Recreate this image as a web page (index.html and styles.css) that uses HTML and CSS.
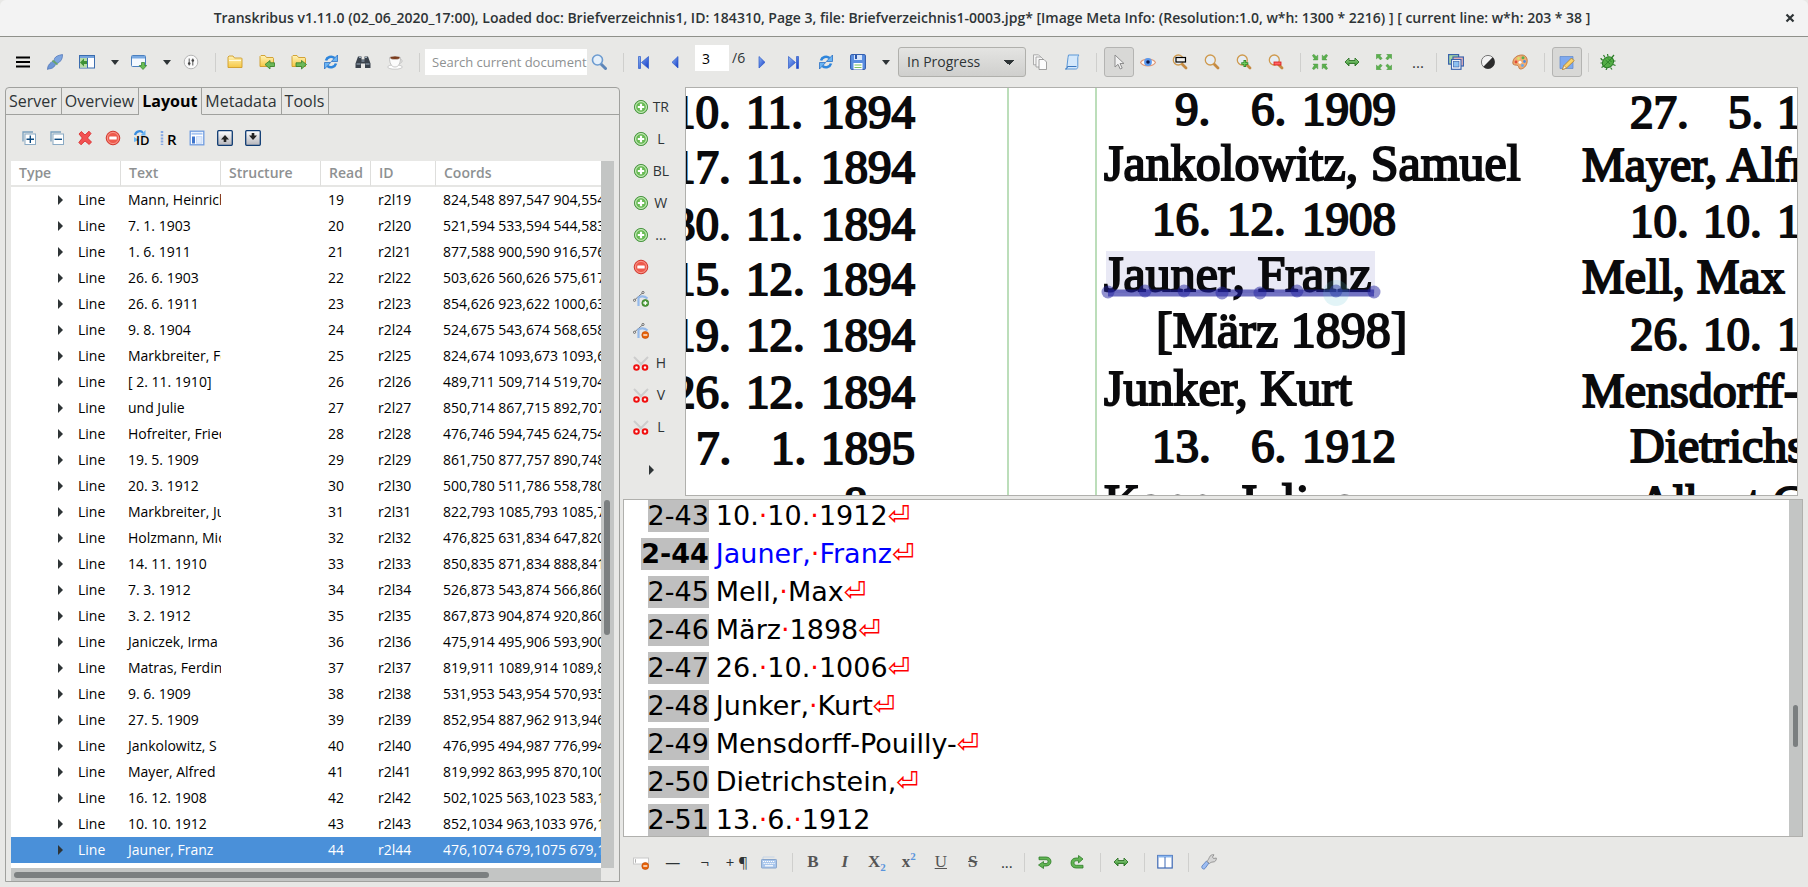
FILE: index.html
```html
<!DOCTYPE html>
<html lang="en">
<head>
<meta charset="utf-8">
<title>Transkribus v1.11.0</title>
<link rel="stylesheet" href="styles.css">
</head>
<body>
<svg class="defs" aria-hidden="true">
  <defs>
    <linearGradient id="g-blue" x1="0" y1="0" x2="1" y2="1"><stop offset="0" stop-color="#8fb8f4"/><stop offset="1" stop-color="#1238c8"/></linearGradient>
    <linearGradient id="g-folder" x1="0" y1="0" x2="0" y2="1"><stop offset="0" stop-color="#fff3b8"/><stop offset="1" stop-color="#f6c845"/></linearGradient>
    <linearGradient id="g-green" x1="0" y1="0" x2="0" y2="1"><stop offset="0" stop-color="#9bd68c"/><stop offset="1" stop-color="#2f8a2a"/></linearGradient>
    <linearGradient id="g-key" x1="0" y1="0" x2="0" y2="1"><stop offset="0" stop-color="#ffffff"/><stop offset="1" stop-color="#b4b4ba"/></linearGradient>
    <symbol id="i-menu" viewBox="0 0 16 16"><path d="M1 3.500h14M1 8h14M1 12.500h14" stroke="#000" stroke-width="2.200"/></symbol>
    <symbol id="i-plug" viewBox="0 0 16 16"><path d="M.5 15.500c0-3 1-5 3.500-7l1-1c2-.5 3 .2 3 1l.5 1c0 2-1 3-3 4.500-2 1-3.500.5-5 1.500z" fill="#6f97d4" stroke="#4a70b4" stroke-width=".7"/><path d="M7.500 4.500C9 2 11 1.500 15.500.5c0 2-.2 4.500-2 6.500-1.500 1.800-3 2.500-4.500 2.300C7.500 8 7 6 7.500 4.500z" fill="#7ea6e0" stroke="#4a70b4" stroke-width=".7"/><path d="M5.500 6.500l5 4" stroke="#69a56c" stroke-width="1.800"/></symbol>
    <symbol id="i-panel-left" viewBox="0 0 16 16"><rect x=".5" y="1.500" width="15" height="12.500" fill="#fdfdff" stroke="#3b6cae"/><path d="M1 2h14v2H1z" fill="#74a3de"/><path d="M8.500 4v10" stroke="#3b6cae"/><path d="M1 4h7v9.500H1z" fill="#b8dca8"/><path d="M1 8.500l4-4v2.500h3v3H5V12.500z" fill="#3e9136"/></symbol>
    <symbol id="i-window-down" viewBox="0 0 16 16"><rect x=".5" y="1.500" width="14" height="11" rx="1" fill="#f4f9ff" stroke="#4c80bf"/><path d="M1 2h13v2.500H1z" fill="#78a9e2"/><path d="M10.500 8.500h3v3h2.200L12 15.500 8.300 11.500h2.200z" fill="#6abf54" stroke="#2e7d28" stroke-width=".7"/></symbol>
    <symbol id="i-sliders" viewBox="0 0 16 16"><circle cx="8" cy="8" r="6.800" fill="#fafafa" stroke="#b5b5b5"/><path d="M6.200 4.500v7M9.800 4.500v7" stroke="#555" stroke-width="1"/><circle cx="6.200" cy="9.500" r="1.300" fill="#444"/><circle cx="9.800" cy="6.500" r="1.300" fill="#444"/></symbol>
    <symbol id="i-folder" viewBox="0 0 16 16"><path d="M1 13.500V3l1-1h4l1.500 2h7l.5.8v8.700z" fill="url(#g-folder)" stroke="#cf9c28" stroke-width=".9"/><path d="M2 6.500h12" stroke="#fffbe0"/></symbol>
    <symbol id="i-folder-back" viewBox="0 0 16 16"><path d="M1 12.500V2.500l1-1h4l1.500 2h6.500l.5.8v8.200z" fill="url(#g-folder)" stroke="#cf9c28" stroke-width=".9"/><path d="M6 10.500l5-4v2.300h4.500v3.700H11v2.500z" fill="#6cb858" stroke="#327f2a" stroke-width=".8"/></symbol>
    <symbol id="i-folder-fwd" viewBox="0 0 16 16"><path d="M1 12.500V2.500l1-1h4l1.500 2h6.500l.5.8v8.200z" fill="url(#g-folder)" stroke="#cf9c28" stroke-width=".9"/><path d="M15.500 10.500l-5-4v2.300H5v3.700h5.500v2.500z" fill="#6cb858" stroke="#327f2a" stroke-width=".8"/></symbol>
    <symbol id="i-refresh" viewBox="0 0 16 16"><path d="M3 6.500C4 3 8.500 1.500 11.500 4" fill="none" stroke="#2f86dc" stroke-width="2.600"/><path d="M14.500 1v6.500H8.300z" fill="#6ab4f4" stroke="#1c66bf" stroke-width=".7"/><path d="M13 9.500C12 13 7.500 14.500 4.500 12" fill="none" stroke="#2f86dc" stroke-width="2.600"/><path d="M1.500 15V8.500h6.200z" fill="#6ab4f4" stroke="#1c66bf" stroke-width=".7"/></symbol>
    <symbol id="i-binoculars" viewBox="0 0 16 16"><path d="M3 2.500h3.500v3h3v-3H13l2.500 7V14h-5.500V9.500H6V14H.5V9.500z" fill="#3a424c"/><path d="M1.500 10h4M10.500 10h4M4 3.500h2M10 3.500h2M6.500 7h3" stroke="#9fb0c0"/></symbol>
    <symbol id="i-cup" viewBox="0 0 16 16"><ellipse cx="8" cy="13" rx="7.300" ry="2.200" fill="#fff" stroke="#b9b9b9" stroke-width=".7"/><path d="M2.500 3.500h11c0 5-1.500 9.500-5.500 9.500S2.500 8.500 2.500 3.500z" fill="#fcfcfc" stroke="#b0b0b0" stroke-width=".7"/><path d="M13 5.500c3-.5 3 3.500-.8 4" fill="none" stroke="#c4c4c4"/><ellipse cx="8" cy="3.800" rx="5" ry="1.800" fill="#7a3c1d" stroke="#ddd" stroke-width=".6"/></symbol>
    <symbol id="i-search" viewBox="0 0 16 16"><path d="M9.500 9.500l5 5" stroke="#5e86b8" stroke-width="3" stroke-linecap="round"/><circle cx="6.500" cy="6" r="5" fill="#e6f0fa" stroke="#6c9bd0" stroke-width="1.600"/></symbol>
    <symbol id="i-first" viewBox="0 0 16 16"><path d="M3.500 2.500v12h2v-12zM13.500 2.500v12L6.500 8.500z" fill="url(#g-blue)" stroke="#2d5ac8" stroke-width=".7"/></symbol>
    <symbol id="i-prev" viewBox="0 0 16 16"><path d="M11 2.500v11.500L5 8.300z" fill="url(#g-blue)" stroke="#2d5ac8" stroke-width=".7"/></symbol>
    <symbol id="i-next" viewBox="0 0 16 16"><path d="M5 2.500v11.500l6-5.700z" fill="url(#g-blue)" stroke="#2d5ac8" stroke-width=".7"/></symbol>
    <symbol id="i-last" viewBox="0 0 16 16"><path d="M12.500 2.500v12h-2v-12zM2.500 2.500v12l7-6z" fill="url(#g-blue)" stroke="#2d5ac8" stroke-width=".7"/></symbol>
    <symbol id="i-save" viewBox="0 0 16 16"><rect x=".6" y=".6" width="14.800" height="14.800" rx="1" fill="#5a8ee0" stroke="#2b55a8"/><path d="M4 1h8v5H4z" fill="#d5e4fa"/><path d="M5 1h2v4H5z" fill="#2b55a8"/><path d="M3.500 9h9v6.500h-9z" fill="#fff"/><path d="M4.500 11h7M4.500 13.500h7" stroke="#7dc25d" stroke-width="1.200"/></symbol>
    <symbol id="i-copy" viewBox="0 0 16 16"><path d="M1.500.8h5l2 2v8h-7z" fill="#f6f6f6" stroke="#9a9a9a" stroke-width=".8"/><path d="M4 3h5l2 2v8H4z" fill="#f8f8f8" stroke="#9a9a9a" stroke-width=".8"/><path d="M7 5.500h5l2.500 2.500v7.500H7z" fill="#fcfcfc" stroke="#8c8c8c" stroke-width=".8"/></symbol>
    <symbol id="i-scroll" viewBox="0 0 16 16"><path d="M4.500 1h10.500c-1 1-1.200 2-1.200 3v8.500c0 2-1 2.500-2 2.500H1.500c1-.5 1.500-1.500 1.500-3l1-8.500z" fill="#d4e8fb" stroke="#5b97d6"/><path d="M1.500 15c1.500 0 2-1 2-2.500h9" fill="none" stroke="#3b78c0"/></symbol>
    <symbol id="i-cursor" viewBox="0 0 16 16"><path d="M4 1v12l3-2.700 2.200 4.700 2-.9L9 9.500h4z" fill="#f2f2f2" stroke="#8e8e8e" stroke-width="1"/></symbol>
    <symbol id="i-eye" viewBox="0 0 16 16"><path d="M.5 8.500C3 4 13 4 15.500 8.500 13 13 3 13 .5 8.500z" fill="#fffaf6" stroke="#e09a7a" stroke-width="1.200"/><circle cx="8" cy="8" r="3.900" fill="#5b9af0"/><circle cx="8" cy="8" r="1.800" fill="#101a4c"/></symbol>
    <symbol id="i-zoom" viewBox="0 0 16 16"><path d="M9.500 9.500l4.500 4.500" stroke="#c58a42" stroke-width="2.800" stroke-linecap="round"/><circle cx="6.300" cy="6" r="5" fill="#e6edf4" stroke="#cf9a4e" stroke-width="1.300"/></symbol>
    <symbol id="i-zoom-sel" viewBox="0 0 16 16"><path d="M9.500 9.500l4.500 4.500" stroke="#c58a42" stroke-width="2.800" stroke-linecap="round"/><circle cx="6.300" cy="6" r="5" fill="#e6edf4" stroke="#cf9a4e" stroke-width="1.300"/><rect x="4" y="3.500" width="9.500" height="4.500" fill="#eee" stroke="#000" stroke-width="1.200"/></symbol>
    <symbol id="i-zoom-in" viewBox="0 0 16 16"><path d="M9.500 9.500l4.500 4.500" stroke="#c58a42" stroke-width="2.800" stroke-linecap="round"/><circle cx="6.300" cy="6" r="5" fill="#e6edf4" stroke="#cf9a4e" stroke-width="1.300"/><path d="M8.800 6v7M5.300 9.500h7" stroke="#2f8a2a" stroke-width="2.600"/><path d="M8.800 7v5M6.300 9.500h5" stroke="#74d060" stroke-width="1"/></symbol>
    <symbol id="i-zoom-out" viewBox="0 0 16 16"><path d="M9.500 9.500l4.500 4.500" stroke="#c58a42" stroke-width="2.800" stroke-linecap="round"/><circle cx="6.300" cy="6" r="5" fill="#e6edf4" stroke="#cf9a4e" stroke-width="1.300"/><rect x="6" y="8" width="7" height="3" fill="#f66" stroke="#d81818" stroke-width=".8"/></symbol>
    <symbol id="i-fit-in" viewBox="0 0 16 16"><g fill="#5cb04e" stroke="#3f8f38" stroke-width=".4"><path id="q-in" d="M.3 1.500L1.800.3l2.400 2.200L5.800 1v5H1l1.300-1.600z"/><use href="#q-in" transform="matrix(-1 0 0 1 16 0)"/><use href="#q-in" transform="matrix(1 0 0 -1 0 16)"/><use href="#q-in" transform="matrix(-1 0 0 -1 16 16)"/></g></symbol>
    <symbol id="i-fit-out" viewBox="0 0 16 16"><g fill="#5cb04e" stroke="#3f8f38" stroke-width=".4"><path id="q-out" d="M.3.3h5L3.900 1.900l2.300 2.400L4.500 6 2 3.500.3 5z"/><use href="#q-out" transform="matrix(-1 0 0 1 16 0)"/><use href="#q-out" transform="matrix(1 0 0 -1 0 16)"/><use href="#q-out" transform="matrix(-1 0 0 -1 16 16)"/></g></symbol>
    <symbol id="i-width" viewBox="0 0 16 16"><path d="M1 8l4-4v2.500h6V4l4 4-4 4V9.500H5V12z" fill="url(#g-green)" stroke="#2c7326" stroke-width=".9"/></symbol>
    <symbol id="i-windows" viewBox="0 0 16 16"><rect x=".6" y=".6" width="10" height="9.500" fill="#a7d8a2" stroke="#3a63ad" stroke-width="1.200"/><rect x="5" y="3" width="10.400" height="9" fill="#f4b6b6" stroke="#3a63ad" stroke-width="1.200"/><rect x="3.500" y="5.500" width="9.500" height="9.800" fill="#fff" stroke="#3a63ad" stroke-width="1.200"/><rect x="5.500" y="7.500" width="5.500" height="5.500" fill="#8cc0f0" stroke="#3a63ad" stroke-width=".7"/></symbol>
    <symbol id="i-contrast" viewBox="0 0 16 16"><circle cx="8" cy="8" r="6.600" fill="#f2f2f2" stroke="#777"/><path d="M12.700 3.300A6.600 6.600 0 0 1 3.300 12.700z" fill="#2c2c2c"/></symbol>
    <symbol id="i-palette" viewBox="0 0 16 16"><path d="M.8 9C.8 4 5 1 10 1c3.500 0 5.500 3 5.200 6.500C14.800 12 11.500 15 8.500 15c-2.300 0-1.200-2.800-2.800-3.500S.8 11.500.8 9z" fill="#f0ad74" stroke="#b86a30" stroke-width=".8"/><circle cx="4" cy="8" r="1.400" fill="#e24a3a"/><circle cx="6.500" cy="4.500" r="1.400" fill="#d8e06a"/><circle cx="11" cy="3.800" r="1.500" fill="#58b050"/><circle cx="12.500" cy="7.500" r="1.400" fill="#508ae0"/><circle cx="8" cy="8.300" r="1.500" fill="#fff"/><circle cx="10.500" cy="11.500" r="1.400" fill="#6aa8e8"/></symbol>
    <symbol id="i-edit" viewBox="0 0 16 16"><path d="M1 2.500h13v12H1z" fill="#7fa9ee" stroke="#5c86cc" stroke-width=".7"/><path d="M12.500 4l2.700 2.700L7.500 14l-4 1.500L5 11.500z" fill="#fbd36a" stroke="#b07e28" stroke-width=".8"/><path d="M5 11.500l2.500 2.500-4 1.500z" fill="#fff4dc" stroke="#b07e28" stroke-width=".6"/></symbol>
    <symbol id="i-bug" viewBox="0 0 16 16"><path d="M3 6C1.500 6 1 5 1 4M3 9H.5M4 12l-2.500 1.500M7 14l-1 2M10.500 13.500l1.500 2M13 10.500l2.500 1M13 7h2.500M11.500 4l2.500-3M8 2.500L7.500 0M5 3.500L3.500 1" stroke="#2a7d26" stroke-width="1.200" fill="none"/><ellipse cx="8" cy="8.300" rx="6" ry="5" transform="rotate(-40 8 8.300)" fill="#53ad45" stroke="#2a7d26"/><path d="M4 12l8-8M5.500 6l4.500 4M8 4.500l3.500 3.500" stroke="#2a7d26" stroke-width=".8"/></symbol>
    <symbol id="i-expand" viewBox="0 0 16 16"><path d="M2 11.500V2h10" fill="none" stroke="#7aa0bf" stroke-width="1.300"/><rect x="4" y="4" width="10.500" height="10.500" fill="#fff" stroke="#8aaac4"/><path d="M5.500 9.300h7.500M9.300 5.500V13" stroke="#0d4a80" stroke-width="1.400"/></symbol>
    <symbol id="i-collapse" viewBox="0 0 16 16"><path d="M2 11.500V2h10" fill="none" stroke="#7aa0bf" stroke-width="1.300"/><rect x="4" y="4" width="10.500" height="10.500" fill="#fff" stroke="#8aaac4"/><path d="M5.500 9.300h7.500" stroke="#0d4a80" stroke-width="1.400"/></symbol>
    <symbol id="i-delete" viewBox="0 0 16 16"><path d="M2 4l2.300-2.500L8 5l4-3.800L14 3.500 10.500 8l4 4-2.300 2.500L8 11l-4 3.800L1.800 12.500 5.300 8z" fill="#f25252" stroke="#d82626" stroke-width=".8"/></symbol>
    <symbol id="i-minus" viewBox="0 0 16 16"><circle cx="8" cy="8" r="6.800" fill="#ee5a4c" stroke="#d23a30"/><circle cx="8" cy="8" r="5.600" fill="none" stroke="#f9a69c" stroke-width=".8"/><rect x="4.300" y="6.500" width="7.400" height="3" rx=".6" fill="#fff"/></symbol>
    <symbol id="i-plus" viewBox="0 0 16 16"><circle cx="8" cy="8" r="6.600" fill="#69bb55" stroke="#4f9848"/><circle cx="8" cy="8" r="5.400" fill="none" stroke="#d4efca" stroke-width="1"/><path d="M8 4.800v6.400M4.800 8h6.400" stroke="#fff" stroke-width="2.200"/></symbol>
    <symbol id="i-page" viewBox="0 0 16 16"><rect x="1.200" y="1.200" width="13.600" height="13.600" fill="#fff" stroke="#6f9ce0" stroke-width="1.300"/><path d="M2.500 3.700h11" stroke="#a9c6f2" stroke-width="2"/><path d="M3 6.500h3v7H3z" fill="#3f75cc"/><rect x="7.500" y="6.700" width="5.500" height="6.500" fill="#dfeafb" stroke="#b4cdf4" stroke-width=".7"/></symbol>
    <symbol id="i-up" viewBox="0 0 16 16"><rect x=".7" y=".7" width="14.600" height="14.600" rx="1" fill="url(#g-key)" stroke="#0d3a72" stroke-width="1.300"/><path d="M8 5l4 4.500H9.300v2.500H6.700V9.500H4z" fill="#222"/></symbol>
    <symbol id="i-down" viewBox="0 0 16 16"><rect x=".7" y=".7" width="14.600" height="14.600" rx="1" fill="url(#g-key)" stroke="#0d3a72" stroke-width="1.300"/><path d="M8 10l4-4.500H9.300V3H6.700v2.500H4z" fill="#222"/></symbol>
    <symbol id="i-curve-add" viewBox="0 0 16 16"><path d="M1.500 9L10 1.500" stroke="#777" stroke-width="1"/><circle cx="1.500" cy="9.300" r="1.100" fill="#eee" stroke="#555" stroke-width=".8"/><circle cx="10" cy="1.500" r="1.100" fill="#eee" stroke="#555" stroke-width=".8"/><path d="M5.500 15V6.500c3-1.500 6-1.500 9 1" fill="none" stroke="#94b9ea" stroke-width="2.200"/><circle cx="12.300" cy="12" r="3.500" fill="#4f9e3b" stroke="#2f7024" stroke-width=".6"/><path d="M12.300 10v4M10.300 12h4" stroke="#fff" stroke-width="1.300"/></symbol>
    <symbol id="i-curve-del" viewBox="0 0 16 16"><path d="M1.500 9L10 1.500" stroke="#777" stroke-width="1"/><circle cx="1.500" cy="9.300" r="1.100" fill="#eee" stroke="#555" stroke-width=".8"/><circle cx="10" cy="1.500" r="1.100" fill="#eee" stroke="#555" stroke-width=".8"/><path d="M5.500 15V6.500c3-1.500 6-1.500 9 1" fill="none" stroke="#94b9ea" stroke-width="2.200"/><circle cx="12.300" cy="12" r="3.500" fill="#e8640a" stroke="#b84400" stroke-width=".6"/><path d="M10.300 12h4" stroke="#fff" stroke-width="1.300"/></symbol>
    <symbol id="i-scissors" viewBox="0 0 16 16"><path d="M1 2l8 8M15 2l-8 8" stroke="#cdcdcd" stroke-width="2"/><circle cx="3.500" cy="12.500" r="2.300" fill="#fff" stroke="#f01010" stroke-width="2"/><circle cx="12" cy="12.500" r="2.300" fill="#fff" stroke="#f01010" stroke-width="2"/></symbol>
    <symbol id="i-field-del" viewBox="0 0 16 16"><rect x=".5" y="4" width="15" height="6" fill="#fff" stroke="#c8c8c8"/><path d="M2.500 5.200v3.500" stroke="#999" stroke-width=".8"/><circle cx="12.300" cy="12" r="3.500" fill="#e8640a" stroke="#b84400" stroke-width=".6"/><path d="M10.300 12h4" stroke="#fff" stroke-width="1.300"/></symbol>
    <symbol id="i-keyboard" viewBox="0 0 16 16"><path d="M2 5.500V3h11.500" fill="none" stroke="#c6d4e6"/><rect x=".4" y="5.500" width="15.200" height="8.500" rx=".8" fill="#a9c6ec" stroke="#86a4cc"/><path d="M2 7.500h12M2.600 9.500h11" stroke="#fff" stroke-width="1.200" stroke-dasharray="1.200 .8"/><path d="M4 11.800h8" stroke="#fff" stroke-width="1.200"/></symbol>
    <symbol id="i-undo" viewBox="0 0 16 16"><path d="M2 3h7c3 0 5 2 5 4.500S12 12 9 12H6.500V14.500L1.500 11 6.500 7.500V9.500H9c1.500 0 2-1 2-2s-.5-1.800-2-1.800H2z" fill="#62b454" stroke="#2e7d28" stroke-width=".8"/></symbol>
    <symbol id="i-redo" viewBox="0 0 16 16"><path d="M14 5L9.500 1.500V4H7C4 4 2 6 2 9s2 5 5 5h7v-2.700H7.500C6 11.300 5 10.300 5 9s1-2.200 2.500-2.200h2V9z" fill="#62b454" stroke="#2e7d28" stroke-width=".8"/></symbol>
    <symbol id="i-columns" viewBox="0 0 16 16"><rect x=".8" y="1.500" width="14.400" height="12.500" fill="#fff" stroke="#3c68b4" stroke-width="1.200"/><path d="M1 2.500h14" stroke="#8ab6ee" stroke-width="2"/><path d="M8 3v11" stroke="#3c68b4"/></symbol>
    <symbol id="i-wrench" viewBox="0 0 16 16"><path d="M8 9l-4 5.500c-1.500 1.500-4-.3-3-2.500L5.500 7z" fill="#9dbdf2" stroke="#5178bd" stroke-width=".8"/><path d="M6 7.500c1-1.500 1.500-2 2.300-4C9 1.500 11 .3 13 .8L11.500 3l1 1.500L15.300 4c.3 2-1 4-3.300 4-1.500 0-2.500.5-3.500 1.500z" fill="#d5d5d5" stroke="#858585" stroke-width=".8"/></symbol>
  </defs>
</svg>

<header class="titlebar">
  <h1 class="title">Transkribus v1.11.0 (02_06_2020_17:00), Loaded doc: Briefverzeichnis1, ID: 184310, Page 3, file: Briefverzeichnis1-0003.jpg* [Image Meta Info: (Resolution:1.0, w*h: 1300 * 2216) ] [ current line: w*h: 203 * 38 ]</h1>
  <button class="close" aria-label="Close"><svg class="close-mark" viewBox="0 0 10 10"><path d="M1.500 1.500l7 7M8.500 1.500l-7 7" stroke="#2e3436" stroke-width="2.200"/></svg></button>
</header>

<div class="toolbar main-toolbar" role="toolbar" aria-label="Main">
  <button class="tool" aria-label="Menu"><svg class="icon"><use href="#i-menu"/></svg></button>
  <button class="tool" aria-label="Connect"><svg class="icon"><use href="#i-plug"/></svg></button>
  <button class="tool" aria-label="Dock left"><svg class="icon"><use href="#i-panel-left"/></svg></button>
  <button class="caret" aria-label="Dock options"></button>
  <button class="tool" aria-label="Dock bottom"><svg class="icon"><use href="#i-window-down"/></svg></button>
  <button class="caret" aria-label="Window options"></button>
  <button class="tool" aria-label="Settings"><svg class="icon"><use href="#i-sliders"/></svg></button>
  <span class="sep"></span>
  <button class="tool" aria-label="Open folder"><svg class="icon"><use href="#i-folder"/></svg></button>
  <button class="tool" aria-label="Import"><svg class="icon"><use href="#i-folder-back"/></svg></button>
  <button class="tool" aria-label="Export"><svg class="icon"><use href="#i-folder-fwd"/></svg></button>
  <button class="tool" aria-label="Reload document"><svg class="icon"><use href="#i-refresh"/></svg></button>
  <button class="tool" aria-label="Find"><svg class="icon"><use href="#i-binoculars"/></svg></button>
  <button class="tool" aria-label="Coffee"><svg class="icon"><use href="#i-cup"/></svg></button>
  <span class="sep"></span>
  <div class="search"><input class="search-box" type="text" placeholder="Search current document..." aria-label="Search current document"><button class="tool" aria-label="Search"><svg class="icon"><use href="#i-search"/></svg></button></div>
  <span class="sep"></span>
  <button class="tool" aria-label="First page"><svg class="icon"><use href="#i-first"/></svg></button>
  <button class="tool" aria-label="Previous page"><svg class="icon"><use href="#i-prev"/></svg></button>
  <div class="pager"><input class="page-box" id="page" type="text" value="3"><label class="page-total" for="page">/6</label></div>
  <button class="tool" aria-label="Next page"><svg class="icon"><use href="#i-next"/></svg></button>
  <button class="tool" aria-label="Last page"><svg class="icon"><use href="#i-last"/></svg></button>
  <button class="tool" aria-label="Reload page"><svg class="icon"><use href="#i-refresh"/></svg></button>
  <button class="tool" aria-label="Save"><svg class="icon"><use href="#i-save"/></svg></button>
  <button class="caret" aria-label="Save options"></button>
  <select class="status" aria-label="Page status"><option>In Progress</option></select>
  <button class="tool" aria-label="Versions"><svg class="icon"><use href="#i-copy"/></svg></button>
  <button class="tool" aria-label="Transcript"><svg class="icon"><use href="#i-scroll"/></svg></button>
  <span class="sep"></span>
  <button class="tool pressed" aria-label="Select" aria-pressed="true"><svg class="icon"><use href="#i-cursor"/></svg></button>
  <button class="tool" aria-label="Visibility"><svg class="icon"><use href="#i-eye"/></svg></button>
  <button class="tool" aria-label="Zoom to selection"><svg class="icon"><use href="#i-zoom-sel"/></svg></button>
  <button class="tool" aria-label="Loupe"><svg class="icon"><use href="#i-zoom"/></svg></button>
  <button class="tool" aria-label="Zoom in"><svg class="icon"><use href="#i-zoom-in"/></svg></button>
  <button class="tool" aria-label="Zoom out"><svg class="icon"><use href="#i-zoom-out"/></svg></button>
  <span class="sep"></span>
  <button class="tool" aria-label="Fit page"><svg class="icon"><use href="#i-fit-in"/></svg></button>
  <button class="tool" aria-label="Fit width"><svg class="icon"><use href="#i-width"/></svg></button>
  <button class="tool" aria-label="Original size"><svg class="icon"><use href="#i-fit-out"/></svg></button>
  <button class="tool more">...</button>
  <span class="sep"></span>
  <button class="tool" aria-label="Views"><svg class="icon"><use href="#i-windows"/></svg></button>
  <button class="tool" aria-label="Contrast"><svg class="icon"><use href="#i-contrast"/></svg></button>
  <button class="tool" aria-label="Colours"><svg class="icon"><use href="#i-palette"/></svg></button>
  <span class="sep"></span>
  <button class="tool pressed" aria-label="Edit" aria-pressed="true"><svg class="icon"><use href="#i-edit"/></svg></button>
  <span class="sep"></span>
  <button class="tool" aria-label="Report bug"><svg class="icon"><use href="#i-bug"/></svg></button>
</div>

<main class="workspace">
  <section class="side">
    <div class="tabs" role="tablist">
      <button class="tab" role="tab">Server</button>
      <button class="tab" role="tab">Overview</button>
      <button class="tab active" role="tab" aria-selected="true">Layout</button>
      <button class="tab" role="tab">Metadata</button>
      <button class="tab" role="tab">Tools</button>
      <span class="tab-fill"></span>
    </div>
    <div class="toolbar layout-toolbar" role="toolbar" aria-label="Layout">
      <button class="tool" aria-label="Expand all"><svg class="icon"><use href="#i-expand"/></svg></button>
      <button class="tool" aria-label="Collapse all"><svg class="icon"><use href="#i-collapse"/></svg></button>
      <button class="tool" aria-label="Clear page"><svg class="icon"><use href="#i-delete"/></svg></button>
      <button class="tool" aria-label="Delete selected"><svg class="icon"><use href="#i-minus"/></svg></button>
      <button class="tool" aria-label="Update IDs"><svg class="icon"><path d="M2 5C3 1 8 0 10 3" fill="none" stroke="#3a8ee0" stroke-width="2.200"/><path d="M12.500 0v5.500H7.500z" fill="#6ab4f4"/><path d="M1 12V7l5 3z" fill="#6ab4f4"/><text class="glyph id-glyph" x="3" y="15">ID</text></svg></button>
      <button class="tool" aria-label="Reading order"><svg class="icon"><path d="M1 1v14" stroke="#86a8e4" stroke-width="2.500" stroke-dasharray="2 1.200"/><text class="glyph r-glyph" x="6" y="15">R</text></svg></button>
      <button class="tool" aria-label="Page layout"><svg class="icon"><use href="#i-page"/></svg></button>
      <button class="tool" aria-label="Move up"><svg class="icon"><use href="#i-up"/></svg></button>
      <button class="tool" aria-label="Move down"><svg class="icon"><use href="#i-down"/></svg></button>
    </div>
    <div class="tree">
      <div class="tree-view">
        <table class="rows">
          <colgroup><col class="c-type"><col class="c-text"><col class="c-text"><col class="c-read"><col class="c-id"><col></colgroup>
          <thead><tr><th>Type</th><th>Text</th><th>Structure</th><th>Read</th><th>ID</th><th>Coords</th></tr></thead>
          <tbody>
            <tr><td>Line</td><td>Mann, Heinrich</td><td></td><td>19</td><td>r2l19</td><td>824,548 897,547 904,554</td></tr>
            <tr><td>Line</td><td>7. 1. 1903</td><td></td><td>20</td><td>r2l20</td><td>521,594 533,594 544,583</td></tr>
            <tr><td>Line</td><td>1. 6. 1911</td><td></td><td>21</td><td>r2l21</td><td>877,588 900,590 916,576</td></tr>
            <tr><td>Line</td><td>26. 6. 1903</td><td></td><td>22</td><td>r2l22</td><td>503,626 560,626 575,617</td></tr>
            <tr><td>Line</td><td>26. 6. 1911</td><td></td><td>23</td><td>r2l23</td><td>854,626 923,622 1000,63</td></tr>
            <tr><td>Line</td><td>9. 8. 1904</td><td></td><td>24</td><td>r2l24</td><td>524,675 543,674 568,658</td></tr>
            <tr><td>Line</td><td>Markbreiter, Fe</td><td></td><td>25</td><td>r2l25</td><td>824,674 1093,673 1093,6</td></tr>
            <tr><td>Line</td><td>[ 2. 11. 1910]</td><td></td><td>26</td><td>r2l26</td><td>489,711 509,714 519,704</td></tr>
            <tr><td>Line</td><td>und Julie</td><td></td><td>27</td><td>r2l27</td><td>850,714 867,715 892,707</td></tr>
            <tr><td>Line</td><td>Hofreiter, Fried</td><td></td><td>28</td><td>r2l28</td><td>476,746 594,745 624,754</td></tr>
            <tr><td>Line</td><td>19. 5. 1909</td><td></td><td>29</td><td>r2l29</td><td>861,750 877,757 890,748</td></tr>
            <tr><td>Line</td><td>20. 3. 1912</td><td></td><td>30</td><td>r2l30</td><td>500,780 511,786 558,780</td></tr>
            <tr><td>Line</td><td>Markbreiter, Ju</td><td></td><td>31</td><td>r2l31</td><td>822,793 1085,793 1085,7</td></tr>
            <tr><td>Line</td><td>Holzmann, Mic</td><td></td><td>32</td><td>r2l32</td><td>476,825 631,834 647,820</td></tr>
            <tr><td>Line</td><td>14. 11. 1910</td><td></td><td>33</td><td>r2l33</td><td>850,835 871,834 888,841</td></tr>
            <tr><td>Line</td><td>7. 3. 1912</td><td></td><td>34</td><td>r2l34</td><td>526,873 543,874 566,860</td></tr>
            <tr><td>Line</td><td>3. 2. 1912</td><td></td><td>35</td><td>r2l35</td><td>867,873 904,874 920,860</td></tr>
            <tr><td>Line</td><td>Janiczek, Irma</td><td></td><td>36</td><td>r2l36</td><td>475,914 495,906 593,900</td></tr>
            <tr><td>Line</td><td>Matras, Ferdin</td><td></td><td>37</td><td>r2l37</td><td>819,911 1089,914 1089,8</td></tr>
            <tr><td>Line</td><td>9. 6. 1909</td><td></td><td>38</td><td>r2l38</td><td>531,953 543,954 570,935</td></tr>
            <tr><td>Line</td><td>27. 5. 1909</td><td></td><td>39</td><td>r2l39</td><td>852,954 887,962 913,946</td></tr>
            <tr><td>Line</td><td>Jankolowitz, S</td><td></td><td>40</td><td>r2l40</td><td>476,995 494,987 776,994</td></tr>
            <tr><td>Line</td><td>Mayer, Alfred</td><td></td><td>41</td><td>r2l41</td><td>819,992 863,995 870,100</td></tr>
            <tr><td>Line</td><td>16. 12. 1908</td><td></td><td>42</td><td>r2l42</td><td>502,1025 563,1023 583,1</td></tr>
            <tr><td>Line</td><td>10. 10. 1912</td><td></td><td>43</td><td>r2l43</td><td>852,1034 963,1033 976,1</td></tr>
            <tr class="selected"><td>Line</td><td>Jauner, Franz</td><td></td><td>44</td><td>r2l44</td><td>476,1074 679,1075 679,1</td></tr>
          </tbody>
        </table>
      </div>
      <div class="scroll-v"><span class="lead-tree"></span><span class="thumb thumb-tree"></span></div>
      <div class="scroll-h"><span class="thumb thumb-h"></span></div>
    </div>
  </section>

  <section class="content">
    <div class="upper">
      <div class="shape-tools" role="toolbar" aria-label="Shapes">
        <button class="shape"><svg class="icon"><use href="#i-plus"/></svg><span class="shape-label">TR</span></button>
        <button class="shape"><svg class="icon"><use href="#i-plus"/></svg><span class="shape-label">L</span></button>
        <button class="shape"><svg class="icon"><use href="#i-plus"/></svg><span class="shape-label">BL</span></button>
        <button class="shape"><svg class="icon"><use href="#i-plus"/></svg><span class="shape-label">W</span></button>
        <button class="shape"><svg class="icon"><use href="#i-plus"/></svg><span class="shape-label">...</span></button>
        <button class="shape" aria-label="Remove shape"><svg class="icon"><use href="#i-minus"/></svg></button>
        <button class="shape" aria-label="Add point"><svg class="icon"><use href="#i-curve-add"/></svg></button>
        <button class="shape" aria-label="Remove point"><svg class="icon"><use href="#i-curve-del"/></svg></button>
        <button class="shape"><svg class="icon"><use href="#i-scissors"/></svg><span class="shape-label">H</span></button>
        <button class="shape"><svg class="icon"><use href="#i-scissors"/></svg><span class="shape-label">V</span></button>
        <button class="shape"><svg class="icon"><use href="#i-scissors"/></svg><span class="shape-label">L</span></button>
        <button class="overflow" aria-label="More shapes"></button>
      </div>
      <div class="scan">
        <svg class="scan-page" role="img" aria-label="Page 3 scan">
          <path d="M322 0v420M410 0v420" stroke="#a6d3a4" stroke-width="1.500"/>
          <path d="M420 163h269v42H420z" fill="#e9e9f5"/>
          <g class="print">
            <text y="40"><tspan x="-14">10.</tspan><tspan x="60">11.</tspan><tspan x="135">1894</tspan></text>
            <text y="95"><tspan x="-14">17.</tspan><tspan x="60">11.</tspan><tspan x="135">1894</tspan></text>
            <text y="152"><tspan x="-14">30.</tspan><tspan x="60">11.</tspan><tspan x="135">1894</tspan></text>
            <text y="207"><tspan x="-14">15.</tspan><tspan x="60">12.</tspan><tspan x="135">1894</tspan></text>
            <text y="263"><tspan x="-14">19.</tspan><tspan x="60">12.</tspan><tspan x="135">1894</tspan></text>
            <text y="320"><tspan x="-14">26.</tspan><tspan x="60">12.</tspan><tspan x="135">1894</tspan></text>
            <text y="376"><tspan x="10">7.</tspan><tspan x="85">1.</tspan><tspan x="135">1895</tspan></text>
            <text x="158" y="431">8</text>
            <text y="37"><tspan x="489">9.</tspan><tspan x="565">6.</tspan><tspan x="616">1909</tspan></text>
            <text class="name" x="418" y="92">Jankolowitz, Samuel</text>
            <text y="147"><tspan x="466">16.</tspan><tspan x="541">12.</tspan><tspan x="616">1908</tspan></text>
            <text class="name" x="418" y="203">Jauner, Franz</text>
            <text class="name" x="470" y="259">[März 1898]</text>
            <text class="name" x="418" y="317">Junker, Kurt</text>
            <text y="374"><tspan x="466">13.</tspan><tspan x="565">6.</tspan><tspan x="616">1912</tspan></text>
            <text class="name" x="418" y="431">Kann, Julius</text>
            <text y="40"><tspan x="944">27.</tspan><tspan x="1042">5.</tspan><tspan x="1091">1909</tspan></text>
            <text class="name-right" x="896" y="93">Mayer, Alfred</text>
            <text y="149"><tspan x="944">10.</tspan><tspan x="1017">10.</tspan><tspan x="1091">1912</tspan></text>
            <text class="name-right" x="896" y="205">Mell, Max</text>
            <text y="262"><tspan x="944">26.</tspan><tspan x="1017">10.</tspan><tspan x="1091">1906</tspan></text>
            <text class="name-right" x="896" y="319">Mensdorff-Pouilly-</text>
            <text class="name-right" x="944" y="374">Dietrichstein,</text>
            <text class="name-right" x="952" y="431">Albert Graf</text>
          </g>
          <path d="M422 205h266" stroke="#1c1c9c" stroke-opacity=".62" stroke-width="7"/>
          <g fill="#2424a0" fill-opacity=".5"><circle cx="422" cy="204" r="6.500"/><circle cx="459" cy="203" r="6.500"/><circle cx="498" cy="203" r="6.500"/><circle cx="536" cy="205" r="6.500"/><circle cx="574" cy="205" r="6.500"/><circle cx="611" cy="203" r="6.500"/><circle cx="650" cy="203" r="6.500"/><circle cx="688" cy="204" r="6.500"/></g>
          <circle cx="650" cy="205" r="13" fill="#5fc0d0" fill-opacity=".18"/>
        </svg>
      </div>
    </div>

    <div class="editor">
      <div class="lines" role="textbox" aria-multiline="true" aria-label="Transcription">
        <div class="line"><span class="num"><span class="tag">2-43</span></span><span class="txt">10.<i class="ws">·</i>10.<i class="ws">·</i>1912<i class="ws">⏎</i></span></div>
        <div class="line current"><span class="num"><span class="tag">2-44</span></span><span class="txt">Jauner,<i class="ws">·</i>Franz<i class="ws">⏎</i></span></div>
        <div class="line"><span class="num"><span class="tag">2-45</span></span><span class="txt">Mell,<i class="ws">·</i>Max<i class="ws">⏎</i></span></div>
        <div class="line"><span class="num"><span class="tag">2-46</span></span><span class="txt">März<i class="ws">·</i>1898<i class="ws">⏎</i></span></div>
        <div class="line"><span class="num"><span class="tag">2-47</span></span><span class="txt">26.<i class="ws">·</i>10.<i class="ws">·</i>1006<i class="ws">⏎</i></span></div>
        <div class="line"><span class="num"><span class="tag">2-48</span></span><span class="txt">Junker,<i class="ws">·</i>Kurt<i class="ws">⏎</i></span></div>
        <div class="line"><span class="num"><span class="tag">2-49</span></span><span class="txt">Mensdorff-Pouilly-<i class="ws">⏎</i></span></div>
        <div class="line"><span class="num"><span class="tag">2-50</span></span><span class="txt">Dietrichstein,<i class="ws">⏎</i></span></div>
        <div class="line"><span class="num"><span class="tag">2-51</span></span><span class="txt">13.<i class="ws">·</i>6.<i class="ws">·</i>1912</span></div>
      </div>
      <div class="scroll-v"><span class="lead-editor"></span><span class="thumb thumb-editor"></span></div>
    </div>

    <div class="toolbar text-toolbar" role="toolbar" aria-label="Text">
      <button class="tool" aria-label="Delete text"><svg class="icon"><use href="#i-field-del"/></svg></button>
      <button class="tool sym">—</button>
      <button class="tool sym">¬</button>
      <button class="tool sym">+&nbsp;¶</button>
      <button class="tool" aria-label="Virtual keyboard"><svg class="icon"><use href="#i-keyboard"/></svg></button>
      <span class="sep"></span>
      <button class="tool fmt"><b>B</b></button>
      <button class="tool fmt"><em>I</em></button>
      <button class="tool fmt"><span>X<sub>2</sub></span></button>
      <button class="tool fmt"><span>x<sup>2</sup></span></button>
      <button class="tool fmt light"><u>U</u></button>
      <button class="tool fmt"><s>S</s></button>
      <button class="tool more">...</button>
      <span class="sep"></span>
      <button class="tool" aria-label="Undo"><svg class="icon"><use href="#i-undo"/></svg></button>
      <button class="tool" aria-label="Redo"><svg class="icon"><use href="#i-redo"/></svg></button>
      <span class="sep"></span>
      <button class="tool" aria-label="Wrap width"><svg class="icon"><use href="#i-width"/></svg></button>
      <span class="sep"></span>
      <button class="tool" aria-label="Columns"><svg class="icon"><use href="#i-columns"/></svg></button>
      <span class="sep"></span>
      <button class="tool" aria-label="Text settings"><svg class="icon"><use href="#i-wrench"/></svg></button>
    </div>
  </section>
</main>
</body>
</html>
```

FILE: styles.css
```css
* { box-sizing: border-box; }

body {
  margin: 0;
  height: 100vh;
  display: flex;
  flex-direction: column;
  overflow: hidden;
  background: #e8e8e6;
  color: #2e3436;
  font: 14px/20px "Open Sans", "Noto Sans", sans-serif;
}

button, input, select { font: inherit; color: inherit; }
button { border: 0; padding: 0; background: none; }
.defs { position: absolute; width: 0; height: 0; }

/* title bar */
.titlebar {
  display: flex;
  align-items: center;
  height: 37px;
  padding: 0 12px 0 20px;
  background: #f3f3f3;
  border-bottom: 1px solid #8f918b;
  border-radius: 6px 6px 0 0;
}
.title {
  flex: 1;
  margin: 0;
  text-align: center;
  white-space: nowrap;
  font-size: 14px;
  font-weight: 600;
}
.close { width: 12px; height: 20px; display: grid; place-items: center; }
.close-mark { width: 10px; height: 10px; }

/* toolbars */
.toolbar { display: flex; align-items: center; gap: 8px; }
.main-toolbar { height: 50px; padding-left: 11px; }
.tool {
  flex: none;
  width: 24px;
  height: 30px;
  display: flex;
  align-items: center;
  justify-content: center;
  white-space: nowrap;
}
.icon { width: 16px; height: 16px; flex: none; overflow: visible; }
.sep { flex: none; width: 8px; height: 19px; margin-right: -4px; background: linear-gradient(#cfcfcd, #cfcfcd) center / 1px 100% no-repeat; }
.caret {
  flex: none;
  width: 16px;
  height: 30px;
  margin-right: -4px;
  display: grid;
  place-items: center;
}
.caret::before { content: ""; border: 4px solid transparent; border-top: 5px solid #2e3436; border-bottom: 0; }
.pressed {
  width: 30px;
  margin-right: -6px;
  border: 1px solid #b4b4b2;
  border-radius: 3px;
  background: #d8d8d6;
}
.more { width: 28px; margin-right: -8px; font-size: 15px; }

.search { display: flex; align-items: center; margin-left: -2px; }
.search-box { width: 162px; height: 26px; padding: 0 0 0 7px; border: 0; background: #fff; font-size: 13px; }
.search-box::placeholder { color: #8e9192; opacity: 1; }
.pager { display: flex; align-items: center; gap: 3px; align-self: flex-start; margin-top: 8px; }
.page-box { width: 34px; height: 26px; padding: 0 7px; border: 0; background: #fff; color: #000; }
.page-total { width: 10px; }
.status {
  width: 128px;
  height: 30px;
  margin-right: -6px;
  padding: 0 8px;
  appearance: none;
  border: 1px solid #b0b0ac;
  border-radius: 3px;
  background:
    conic-gradient(from -45deg at 50% 100%, #2e3436 90deg, transparent 0) right 11px center / 10px 5px no-repeat,
    linear-gradient(#e4e4e2, #cfcfcd);
  font-size: 14px;
}

/* main split */
.workspace { flex: 1; min-height: 0; display: flex; gap: 3px; padding-left: 5px; }
.side {
  flex: 0 0 34.1%;
  min-width: 0;
  margin-bottom: 5px;
  display: flex;
  flex-direction: column;
  border: 1px solid #a0a19e;
  border-radius: 4px 4px 0 0;
}
.tabs { display: flex; height: 27px; }
.tab {
  padding: 0 4px 0 3px;
  border-right: 1px solid #a0a19e;
  border-bottom: 1px solid #a0a19e;
  font-size: 16px;
  line-height: 24px;
}
.tab.active { border-bottom-color: transparent; color: #000; font-weight: 700; }
.tab-fill { flex: 1; border-bottom: 1px solid #a0a19e; }
.layout-toolbar { height: 46px; padding-left: 11px; gap: 4px; }
.glyph { fill: #000; font-weight: 600; }
.id-glyph { font-size: 13px; }
.r-glyph { font-size: 15px; }

/* region tree */
.tree {
  flex: 1;
  min-height: 0;
  margin: 0 5px;
  display: grid;
  grid-template: minmax(0, 1fr) 13px / minmax(0, 1fr) 13px;
}
.tree-view { overflow: hidden; background: #fff; }
.rows { width: 100%; table-layout: fixed; border-collapse: separate; border-spacing: 0; color: #000; }
.c-type { width: 110px; }
.c-text { width: 100px; }
.c-read { width: 50px; }
.c-id { width: 65px; }
.rows th {
  height: 26px;
  padding: 0 0 1px 8px;
  border-right: 1px solid #dededc;
  border-bottom: 2px solid #e6e6e4;
  color: #8e9192;
  font-weight: 600;
  text-align: left;
}
.rows th:last-child { border-right: 0; }
.rows td { height: 26px; padding: 0 0 0 7px; overflow: hidden; white-space: nowrap; }
.rows td:first-child { padding-left: 47px; }
.rows td:first-child::before {
  content: "";
  display: inline-block;
  margin-right: 15px;
  border: 5px solid transparent;
  border-left-color: #2e3436;
  border-right: 0;
}
.selected { background: #4a90d9; color: #fff; }

.scroll-v { display: flex; flex-direction: column; align-items: center; background: #c3c5c4; }
.scroll-h { display: flex; align-items: center; padding-left: 3px; background: #c3c5c4; }
.thumb { border-radius: 3px; background: #7b7f80; }
.lead-tree { flex: 0 0 48%; }
.thumb-tree { flex: 0 0 19%; width: 6px; }
.thumb-h { width: 81%; height: 6px; }
.lead-editor { flex: 0 0 61%; }
.thumb-editor { flex: 0 0 42px; width: 5px; }

/* image and text */
.content { flex: 1; min-width: 0; display: flex; flex-direction: column; }
.upper { flex: 411 0 0; min-height: 0; display: flex; padding-right: 10px; }
.shape-tools { flex: 0 0 62px; padding: 4px 0 0 10px; }
.shape { display: flex; align-items: center; gap: 4px; height: 32px; }
.shape-label { width: 16px; text-align: center; font-size: 14px; display: flex; justify-content: center; }
.overflow { display: block; margin: 22px 0 0 16px; }
.overflow::before { content: ""; display: block; border: 5px solid transparent; border-left-color: #2e3436; border-right: 0; }
.scan { flex: 1; min-width: 0; border: 1px solid #b0b0ad; background: #fff; overflow: hidden; }
.scan-page { display: block; width: 100%; height: 100%; }
.print {
  font: 47px "Liberation Serif", serif;
  fill: #0a0a0c;
  stroke: #0a0a0c;
  stroke-width: 2;
}
.name { font-size: 50px; }
.name-right { font-size: 48px; }

.editor {
  flex: 337 0 0;
  min-height: 0;
  margin: 3px 5px 0 0;
  display: grid;
  grid-template-columns: minmax(0, 1fr) 13px;
  border: 1px solid #b0b0ad;
  background: #fff;
}
.lines { overflow: hidden; color: #000; font: 27px/32px "DejaVu Sans", sans-serif; }
.line { display: flex; gap: 7px; height: 32px; margin-bottom: 6px; white-space: nowrap; }
.num { width: 85px; display: flex; justify-content: flex-end; }
.tag { background: #bfbfbf; }
.current .tag { font-weight: 700; }
.current .txt { color: #00f; }
.ws { color: #f00; font-style: normal; }

.text-toolbar { flex: 0 0 50px; padding-left: 6px; }
.sym { font-size: 15px; }
.fmt { font: 700 17px/20px "Liberation Serif", serif; color: #555; }
.light { font-weight: 400; }
.fmt sub, .fmt sup { font-size: 11px; line-height: 0; color: #5a94dc; }
```
